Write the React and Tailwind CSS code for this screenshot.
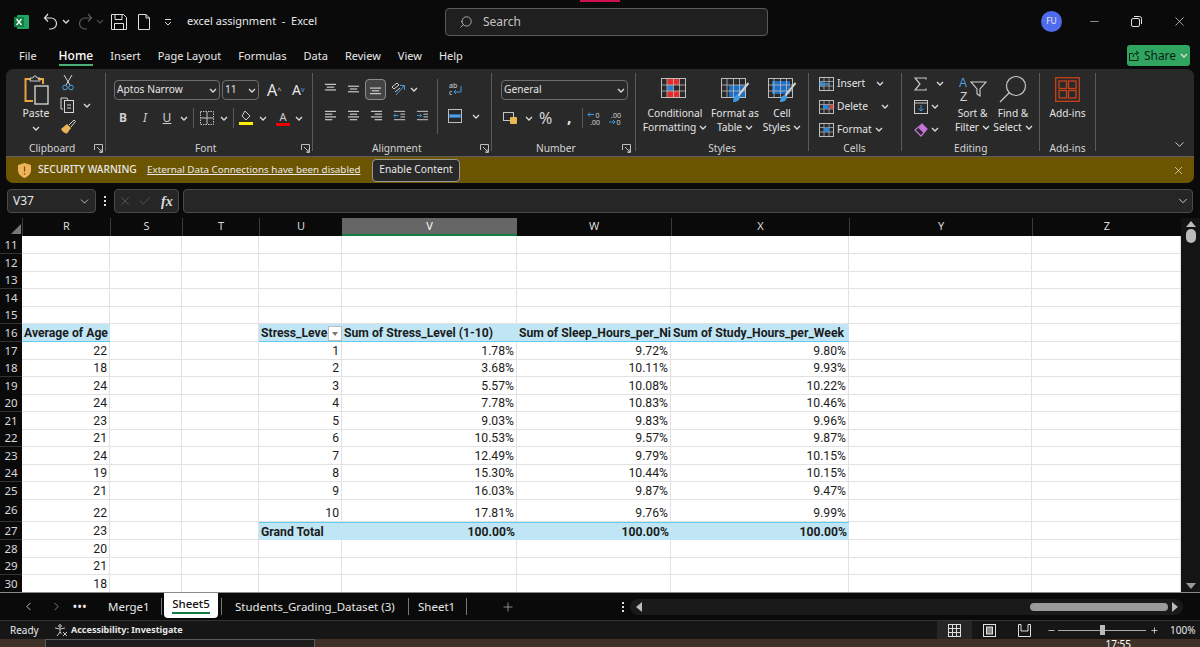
import { Search, X, Minus, Plus, ChevronLeft, ChevronRight, ChevronDown, Check } from 'lucide-react';

const labelRow = 'h-[17px] pt-[2px] flex items-center text-[#d4d4d4]';

const Chev = ({ className = '' }) => (
  <svg width="8" height="5" viewBox="0 0 8 5" className={`shrink-0 ${className}`} fill="none" stroke="#dcdcdc" strokeWidth="1.3">
    <path d="M1 1l3 3 3-3" />
  </svg>
);

const Launcher = () => (
  <svg width="9" height="9" viewBox="0 0 9 9" fill="none" stroke="#bdbdbd" strokeWidth="1" className="shrink-0">
    <path d="M.5 6V.5H8.5V8.5H6M3 3l5 5M8 5v3H5" />
  </svg>
);

const Sep = () => <div className="w-px h-[78px] bg-[#5a5a5a] mt-1 shrink-0" />;
const MiniSep = () => <div className="w-px h-[20px] bg-[#5a5a5a] shrink-0" />;

const Lines = ({ rows, w = 13 }) => (
  <svg width={w} height="14" viewBox="0 0 14 14" stroke="#d6d6d6" strokeWidth="1.2" className="shrink-0">
    {rows.map((r, i) => <path key={i} d={`M${r[0]} ${r[1]}H${r[2]}`} />)}
  </svg>
);

const AddInsIcon = () => (
  <svg width="25" height="25" viewBox="0 0 25 25" fill="none" stroke="#c8421c" strokeWidth="1.3">
    <rect x=".7" y=".7" width="23.6" height="23.6" />
    <rect x="4" y="4" width="7.5" height="7.5" />
    <rect x="13.5" y="4" width="7.5" height="7.5" />
    <rect x="4" y="13.5" width="7.5" height="7.5" />
    <rect x="13.5" y="13.5" width="7.5" height="7.5" />
  </svg>
);

const TableIcon = ({ kind }) => (
  <svg width="29" height="25" viewBox="0 0 29 25" fill="none">
    <rect x=".5" y=".5" width="24" height="19" stroke="#bdbdbd" />
    {kind === 'cond' && (
      <>
        <rect x="6" y="1" width="12" height="6" fill="#e22b2b" />
        <rect x="6" y="7" width="6" height="6" fill="#2f7fd1" />
        <rect x="6" y="13" width="13" height="6" fill="#e22b2b" />
      </>
    )}
    {kind === 'table' && <rect x="8" y="7" width="16" height="12" fill="#1e6fc4" />}
    {kind === 'cell' && <rect x="4" y="3" width="18" height="13" fill="#1e6fc4" />}
    <path d="M.5 7H24.5M.5 13H24.5M6 1V19M12.500 1V19M18.500 1V19" stroke="#bdbdbd" strokeWidth=".8" />
    {kind !== 'cond' && (
      <>
        <path d="M27.500 5L17 18" stroke="#d0d0d0" strokeWidth="2" />
        <path d="M12 24c0-4 2-7 5-7l2 2c0 3-3 5-7 5z" fill="#3d9be0" />
      </>
    )}
  </svg>
);

const CellRowIcon = ({ kind }) => (
  <svg width="16" height="14" viewBox="0 0 16 14" fill="none" className="shrink-0">
    <rect x=".5" y=".5" width="14" height="13" stroke="#bdbdbd" />
    <path d="M.5 4.500H14.500M.5 9H14.500M5 .5V13.500M10 .5V13.500" stroke="#bdbdbd" strokeWidth=".7" />
    {kind === 'insert' && <path d="M1 7H11M4 4L1 7l3 3" stroke="#3d9be0" strokeWidth="1.4" />}
    {kind === 'delete' && (
      <>
        <rect x="4" y="5" width="5" height="4" fill="#2a86dc" />
        <path d="M10.500 4.500l4 4.500M14.500 4.500l-4 4.500" stroke="#e0504a" strokeWidth="1.300" />
      </>
    )}
    {kind === 'format' && <rect x="5" y="4.500" width="5" height="4.500" fill="#2a86dc" />}
  </svg>
);

function Clipboard() {
  return (
    <div className="w-[99px] shrink-0 flex flex-col">
      <div className="flex-1 min-h-0 flex pl-[10px]">
        <div className="w-[40px] flex flex-col items-center pt-[6px]">
          <svg width="25" height="30" viewBox="0 0 25 30" fill="none">
            <path d="M7 4H1.500V26H9" stroke="#e8a33a" strokeWidth="2" />
            <path d="M14 4h5v5" stroke="#e8a33a" strokeWidth="2" />
            <path d="M6 6V3h3l1-2h2l1 2h3v3z" stroke="#c9c9c9" />
            <rect x="11" y="11" width="13" height="18" stroke="#dcdcdc" strokeWidth="1.300" />
          </svg>
          <span className="text-[10.5px] leading-[14px] mt-[1px]">Paste</span>
          <Chev className="mt-[6px]" />
        </div>
        <div className="flex flex-col pl-[4px] pt-[5px] gap-[6px]">
          <svg width="12" height="17" viewBox="0 0 12 17" fill="none" className="ml-[2px]">
            <path d="M2 1l6 10M10 1L4 11" stroke="#d6d6d6" />
            <circle cx="3" cy="13.500" r="2.300" stroke="#4fa3e3" />
            <circle cx="9" cy="13.500" r="2.300" stroke="#4fa3e3" />
          </svg>
          <div className="flex items-center gap-[7px]">
            <svg width="16" height="16" viewBox="0 0 16 16" fill="none" stroke="#d6d6d6">
              <path d="M3 12H1V1h6l1 2" />
              <rect x="4.500" y="3.500" width="9" height="12" />
              <path d="M7 8h4M7 11h4" />
            </svg>
            <Chev />
          </div>
          <svg width="16" height="15" viewBox="0 0 16 15" fill="none">
            <path d="M9 6L14 1l1.500 1.500L11 8" stroke="#d6d6d6" />
            <path d="M1 10l6-5 4 4-4 5.500c-2 0-5-2-6-4.500z" fill="#eab35a" />
          </svg>
        </div>
      </div>
      <div className={`${labelRow} pl-[22px] pr-[2px] justify-between`}>
        <span className="text-[10.2px] ml-[1px]">Clipboard</span>
        <Launcher />
      </div>
    </div>
  );
}

function Font() {
  return (
    <div className="w-[206px] shrink-0 flex flex-col">
      <div className="flex-1 min-h-0 pl-[8px] pt-[11px]">
        <div className="flex items-center gap-[2px]">
          <div className="w-[106px] h-[20px] rounded-[4px] border border-[#6e6e6e] flex items-center justify-between pl-[2px] pr-[2px] text-[10.2px]">
            <span>Aptos Narrow</span>
            <Chev />
          </div>
          <div className="w-[37px] h-[20px] rounded-[4px] border border-[#6e6e6e] flex items-center justify-between pl-[2px] pr-[2px] text-[10.2px]">
            <span>11</span>
            <Chev />
          </div>
          <span className="ml-[6px] text-[16px] leading-none w-[15px] text-[#e6e6e6]">A<sup className="text-[7px] text-[#ddd]">^</sup></span>
          <span className="ml-[8px] text-[14px] leading-none w-[15px] text-[#e6e6e6]">A<sup className="text-[7px] text-[#4fa3e3]">v</sup></span>
        </div>
        <div className="flex items-center mt-[8px] h-[20px] text-[12px] text-[#cfcfcf]">
          <span className="w-[12px] ml-[3px] font-bold text-center">B</span>
          <span className="w-[10px] ml-[11px] italic text-center">I</span>
          <span className="w-[12px] ml-[11px] underline text-center">U</span>
          <Chev className="ml-[7px]" />
          <div className="ml-[5px]"><MiniSep /></div>
          <svg width="14" height="14" viewBox="0 0 14 14" fill="none" stroke="#c4c4c4" className="ml-[6px]">
            <rect x=".5" y=".5" width="13" height="13" strokeDasharray="1.500 1" />
            <path d="M7 1V13M1 7H13" />
          </svg>
          <Chev className="ml-[6px]" />
          <div className="ml-[5px]"><MiniSep /></div>
          <svg width="14" height="16" viewBox="0 0 14 16" fill="none" className="ml-[5px]">
            <path d="M6 1l5 5-4 4-4-4z" stroke="#d0d0d0" />
            <rect y="12" width="14" height="3" fill="#ffee00" />
          </svg>
          <Chev className="ml-[6px]" />
          <div className="w-[14px] ml-[9px] flex flex-col items-center leading-none">
            <span className="text-[11px] leading-[12px]">A</span>
            <span className="w-[14px] h-[3px] bg-[#f00000]" />
          </div>
          <Chev className="ml-[5px]" />
        </div>
      </div>
      <div className={`${labelRow} pr-[2px] justify-between`}>
        <span className="text-[10.2px] ml-[89px]">Font</span>
        <Launcher />
      </div>
    </div>
  );
}

function Alignment() {
  return (
    <div className="w-[178px] shrink-0 flex flex-col">
      <div className="flex-1 min-h-0 flex pl-[11px] pt-[9px]">
        <div>
          <div className="flex items-center h-[22px] gap-[10px]">
            <Lines rows={[[1, 2, 13], [3, 5, 11], [1, 8, 13]]} />
            <Lines rows={[[1, 4, 13], [3, 7, 11], [1, 10, 13]]} />
            <div className="w-[21px] h-[21px] -ml-[5px] rounded-[4px] border border-[#8c8c8c] bg-[#444] flex items-center justify-center">
              <Lines rows={[[1, 6, 13], [3, 9, 11], [1, 12, 13]]} />
            </div>
            <div className="flex items-center gap-[5px] -ml-[5px]">
              <svg width="14" height="14" viewBox="0 0 14 14" fill="none">
                <path d="M1 5l5-4 2 2-5 4zM4 10l5-4" stroke="#cfcfcf" />
                <path d="M5 13L13 4M9 3.500h4.500V8" stroke="#3d9be0" />
              </svg>
              <Chev />
            </div>
          </div>
          <div className="flex items-center mt-[6px] h-[20px] gap-[10px]">
            <Lines rows={[[1, 2, 13], [1, 5, 9], [1, 8, 13], [1, 11, 9]]} />
            <Lines rows={[[1, 2, 13], [3, 5, 11], [1, 8, 13], [3, 11, 11]]} />
            <Lines rows={[[1, 2, 13], [5, 5, 13], [1, 8, 13], [5, 11, 13]]} />
            <svg width="13" height="14" viewBox="0 0 14 14" fill="none" stroke="#d6d6d6">
              <path d="M1 2H13M8 5H13M8 8H13M1 11H13" />
              <path d="M6 6.500H1M3 4.500L1 6.500l2 2" stroke="#3d9be0" />
            </svg>
            <svg width="13" height="14" viewBox="0 0 14 14" fill="none" stroke="#d6d6d6">
              <path d="M1 2H13M8 5H13M8 8H13M1 11H13" />
              <path d="M1 6.500H6M4 4.500l2 2-2 2" stroke="#3d9be0" />
            </svg>
          </div>
        </div>
        <div className="ml-[8px] mt-[1px]"><div className="w-px h-[55px] bg-[#5a5a5a]" /></div>
        <div className="ml-[10px] flex flex-col items-start">
          <div className="h-[22px] flex items-center">
            <svg width="14" height="16" viewBox="0 0 14 16" fill="none">
              <text x="1" y="7" fontSize="7" fill="#d6d6d6">ab</text>
              <text x="1" y="14" fontSize="7" fill="#d6d6d6">c</text>
              <path d="M13 5v6H6M8 9l-2 2 2 2" stroke="#3d9be0" />
            </svg>
          </div>
          <div className="flex items-center mt-[6px] h-[20px] gap-[10px]">
            <svg width="14" height="14" viewBox="0 0 14 14" fill="none">
              <rect x=".5" y=".5" width="13" height="13" stroke="#bdbdbd" />
              <rect x="1" y="5" width="12" height="4" fill="#2a6fb0" />
              <path d="M2 7h10" stroke="#8fd0ff" />
            </svg>
            <Chev />
          </div>
        </div>
      </div>
      <div className={`${labelRow} pr-[2px] justify-between`}>
        <span className="text-[10.2px] ml-[59px]">Alignment</span>
        <Launcher />
      </div>
    </div>
  );
}

function NumberGroup() {
  return (
    <div className="w-[143px] shrink-0 flex flex-col">
      <div className="flex-1 min-h-0 pl-[9px] pt-[11px]">
        <div className="w-[127px] h-[20px] rounded-[4px] border border-[#6e6e6e] flex items-center justify-between px-[2px] text-[10.2px]">
          <span>General</span>
          <Chev />
        </div>
        <div className="flex items-center mt-[8px] h-[20px] pl-[2px]">
          <svg width="15" height="12" viewBox="0 0 15 12" fill="none">
            <rect x=".5" y=".5" width="10" height="8" stroke="#c4c4c4" />
            <rect x="7" y="5" width="7" height="7" rx="1" fill="#e8b94f" />
          </svg>
          <Chev className="ml-[7px]" />
          <span className="ml-[6px] w-[16px] text-[16px] text-[#d8d8d8]">%</span>
          <span className="ml-[12px] w-[8px] text-[16px] font-bold leading-none mb-[3px]">,</span>
          <div className="ml-[7px]"><MiniSep /></div>
          <svg width="15" height="15" viewBox="0 0 15 15" fill="none" className="ml-[4px]">
            <path d="M7 3.500H1M3 1.500L1 3.500l2 2" stroke="#3d9be0" />
            <text x="8.500" y="7" fontSize="7" fill="#d4d4d4">0</text>
            <text x="3" y="14" fontSize="7" fill="#d4d4d4">.00</text>
          </svg>
          <svg width="15" height="15" viewBox="0 0 15 15" fill="none" className="ml-[6px]">
            <text x="3" y="6.500" fontSize="7" fill="#d4d4d4">.00</text>
            <path d="M1 11H7M5 9l2 2-2 2" stroke="#3d9be0" />
            <text x="8.500" y="14" fontSize="7" fill="#d4d4d4">0</text>
          </svg>
        </div>
      </div>
      <div className={`${labelRow} pr-[4px] justify-between`}>
        <span className="text-[10.2px] ml-[44px]">Number</span>
        <Launcher />
      </div>
    </div>
  );
}

function Styles() {
  return (
    <div className="w-[172px] shrink-0 flex flex-col">
      <div className="flex-1 min-h-0 flex pt-[9px] pl-[5px] text-[10.2px] leading-[14px] text-center">
        <div className="w-[68px] flex flex-col items-center">
          <TableIcon kind="cond" />
          <span className="mt-[3px] whitespace-nowrap">Conditional</span>
          <span className="whitespace-nowrap flex items-center gap-[3px]">Formatting <Chev /></span>
        </div>
        <div className="w-[56px] ml-[-2px] flex flex-col items-center">
          <TableIcon kind="table" />
          <span className="mt-[3px] whitespace-nowrap">Format as</span>
          <span className="whitespace-nowrap flex items-center gap-[3px]">Table <Chev /></span>
        </div>
        <div className="w-[38px] flex flex-col items-center">
          <TableIcon kind="cell" />
          <span className="mt-[3px] whitespace-nowrap">Cell</span>
          <span className="whitespace-nowrap flex items-center gap-[3px]">Styles <Chev /></span>
        </div>
      </div>
      <div className={`${labelRow} justify-center`}>
        <span className="text-[10.2px]">Styles</span>
      </div>
    </div>
  );
}

function Cells() {
  return (
    <div className="w-[92px] shrink-0 flex flex-col">
      <div className="flex-1 min-h-0 flex flex-col pl-[10px] pt-[3px] text-[10.2px]">
        <div className="h-[23px] shrink-0 flex items-center">
          <CellRowIcon kind="insert" />
          <span className="ml-[2px] w-[37px]">Insert</span>
          <Chev className="ml-[2px]" />
        </div>
        <div className="h-[23px] shrink-0 flex items-center">
          <CellRowIcon kind="delete" />
          <span className="ml-[2px] w-[42px]">Delete</span>
          <Chev className="ml-[2px]" />
        </div>
        <div className="h-[23px] shrink-0 flex items-center">
          <CellRowIcon kind="format" />
          <span className="ml-[2px]">Format</span>
          <Chev className="ml-[3px]" />
        </div>
      </div>
      <div className={`${labelRow} justify-center`}>
        <span className="text-[10.2px] ml-[-1px]">Cells</span>
      </div>
    </div>
  );
}

function Editing() {
  return (
    <div className="w-[137px] shrink-0 flex flex-col">
      <div className="flex-1 min-h-0 flex pl-[12px] pt-[3px] text-[10.2px] leading-[14px] text-center">
        <div className="w-[40px] flex flex-col">
          <div className="h-[23px] shrink-0 flex items-center gap-[9px]">
            <svg width="13" height="14" viewBox="0 0 13 14" fill="none" stroke="#c8c8c8" strokeWidth="1.200">
              <path d="M12 2.500V1H1l5 6-5 6h11v-1.500" />
            </svg>
            <Chev />
          </div>
          <div className="h-[23px] shrink-0 flex items-center gap-[3px]">
            <svg width="14" height="14" viewBox="0 0 14 14" fill="none">
              <rect x=".5" y=".5" width="13" height="13" stroke="#c8c8c8" />
              <path d="M1 3H13" stroke="#c8c8c8" />
              <path d="M7 5v6M4.500 8.500L7 11l2.500-2.500" stroke="#3d9be0" />
            </svg>
            <Chev />
          </div>
          <div className="h-[23px] shrink-0 flex items-center gap-[3px]">
            <svg width="14" height="14" viewBox="0 0 14 14" fill="none">
              <path d="M8 1l5 5-6 7-6-6z" stroke="#c774d8" strokeWidth="1.200" />
              <path d="M8 1l5 5-3.500 4-5-5z" fill="#c774d8" />
            </svg>
            <Chev />
          </div>
        </div>
        <div className="w-[45px] ml-[-4px] flex flex-col items-center">
          <svg width="28" height="28" viewBox="0 0 28 28" fill="none" className="mt-[3px]">
            <text x="0" y="11.500" fontSize="12" fontFamily="Liberation Sans" fill="#4fa3e3">A</text>
            <text x="1" y="25.500" fontSize="12" fontFamily="Liberation Sans" fill="#d4d4d4">Z</text>
            <path d="M12 7H27l-6 7v7l-3-2v-5z" stroke="#d0d0d0" strokeWidth="1.100" />
          </svg>
          <span className="mt-[3px] whitespace-nowrap">Sort &amp;</span>
          <span className="whitespace-nowrap flex items-center gap-[3px]">Filter <Chev /></span>
        </div>
        <div className="w-[40px] ml-[-2px] flex flex-col items-center">
          <svg width="28" height="28" viewBox="0 0 28 28" fill="none" stroke="#c8c8c8" strokeWidth="1.200" className="mt-[3px]">
            <circle cx="17" cy="11" r="9.500" />
            <path d="M10 18L1 27" />
          </svg>
          <span className="mt-[3px] whitespace-nowrap">Find &amp;</span>
          <span className="whitespace-nowrap flex items-center gap-[3px]">Select <Chev /></span>
        </div>
      </div>
      <div className={`${labelRow} pl-[52px]`}>
        <span className="text-[10.2px]">Editing</span>
      </div>
    </div>
  );
}

function AddIns() {
  return (
    <div className="w-[55px] shrink-0 flex flex-col">
      <div className="flex-1 min-h-0 flex flex-col items-center pt-[8px] text-[10.2px] leading-[14px]">
        <AddInsIcon />
        <span className="mt-[4px] whitespace-nowrap">Add-ins</span>
      </div>
      <div className={`${labelRow} justify-center`}>
        <span className="text-[10.2px]">Add-ins</span>
      </div>
    </div>
  );
}

const pct = [
  ['1', '1.78%', '9.72%', '9.80%'],
  ['2', '3.68%', '10.11%', '9.93%'],
  ['3', '5.57%', '10.08%', '10.22%'],
  ['4', '7.78%', '10.83%', '10.46%'],
  ['5', '9.03%', '9.83%', '9.96%'],
  ['6', '10.53%', '9.57%', '9.87%'],
  ['7', '12.49%', '9.79%', '10.15%'],
  ['8', '15.30%', '10.44%', '10.15%'],
  ['9', '16.03%', '9.87%', '9.47%'],
  ['10', '17.81%', '9.76%', '9.99%'],
];
const ages = ['22', '18', '24', '24', '23', '21', '24', '19', '21', '22', '23', '20', '21', '18'];
const heights = {
  11: 'h-[18px]', 12: 'h-[17px]', 13: 'h-[18px]', 14: 'h-[17px]', 15: 'h-[18px]',
  16: 'h-[18px]', 17: 'h-[17px]', 18: 'h-[18px]', 19: 'h-[17px]', 20: 'h-[18px]',
  21: 'h-[17px]', 22: 'h-[18px]', 23: 'h-[17px]', 24: 'h-[18px]', 25: 'h-[17px]',
  26: 'h-[23px]', 27: 'h-[18px]', 28: 'h-[17px]', 29: 'h-[18px]', 30: 'h-[17px]',
};

const gridCols = 'grid grid-cols-[22px_88px_72px_77px_83px_175px_154px_178px_183px_149px]';
const cell = 'border-r border-b border-[#e2e2e2] px-[2px] flex items-end justify-end leading-[15px] whitespace-nowrap overflow-hidden';
const head = 'bg-[#c0e6f5] border-b border-[#61cbf3] px-[2px] flex items-end font-bold leading-[15px] whitespace-nowrap overflow-hidden';
const total = 'bg-[#c0e6f5] border-t border-[#61cbf3] px-[2px] flex items-end justify-end font-bold leading-[15px] whitespace-nowrap overflow-hidden';

function SheetRow({ n }) {
  const i = n - 17;
  const age = n >= 17 ? ages[i] : '';
  const row = n >= 17 && n <= 26 ? pct[i] : null;
  return (
    <div className={`${gridCols} ${heights[n]}`}>
      <div className="bg-[#0a0a0a] text-[#dadada] text-[11.5px] flex items-center justify-center border-b border-[#333] font-['Noto_Sans',sans-serif]">{n}</div>
      {n === 16 ? (
        <>
          <div className={head}>Average of Age</div>
          <div className={cell} />
          <div className={cell} />
          <div className={`${head} justify-between pr-0`}>
            <span>Stress_Leve</span>
            <span className="w-[14px] h-[15px] bg-white border border-[#bdbdbd] flex items-center justify-center">
              <span className="w-0 h-0 border-x-[3px] border-x-transparent border-t-[4px] border-t-[#777]" />
            </span>
          </div>
          <div className={head}>Sum of Stress_Level (1-10)</div>
          <div className={`${head} pr-0`}>Sum of Sleep_Hours_per_Ni</div>
          <div className={head}>Sum of Study_Hours_per_Week</div>
          <div className={cell} />
          <div className={cell} />
        </>
      ) : n === 27 ? (
        <>
          <div className={cell}>{age}</div>
          <div className={cell} />
          <div className={cell} />
          <div className={`${total} justify-start`}>Grand Total</div>
          <div className={total}>100.00%</div>
          <div className={total}>100.00%</div>
          <div className={total}>100.00%</div>
          <div className={cell} />
          <div className={cell} />
        </>
      ) : (
        <>
          <div className={cell}>{age}</div>
          <div className={cell} />
          <div className={cell} />
          <div className={cell}>{row && row[0]}</div>
          <div className={cell}>{row && row[1]}</div>
          <div className={cell}>{row && row[2]}</div>
          <div className={cell}>{row && row[3]}</div>
          <div className={cell} />
          <div className={cell} />
        </>
      )}
    </div>
  );
}

const rowNums = Array.from({ length: 20 }, (_, i) => i + 11);
const menu = ['Insert', 'Page Layout', 'Formulas', 'Data', 'Review', 'View', 'Help'];

export default function App() {
  return (
    <div className="w-[1200px] h-[647px] overflow-hidden bg-[#0a0a0a] text-[#e8e8e8] flex flex-col relative font-['Noto_Sans',sans-serif] text-[11px]">
      <div className="absolute top-0 left-[580px] w-[40px] h-[2px] bg-[#d0104c]" />

      {/* title bar */}
      <div className="h-[43px] shrink-0 flex items-center">
        <svg width="16" height="16" viewBox="0 0 16 16" className="ml-[14px] shrink-0">
          <rect x="3" y="1" width="12" height="14" rx="1" fill="#21a366" />
          <rect x="0" y="3" width="10" height="10" fill="#107c41" />
          <path d="M2.500 5l5 6M7.500 5l-5 6" stroke="#fff" strokeWidth="1.300" />
        </svg>
        <svg width="15" height="17" viewBox="0 0 15 17" fill="none" stroke="#e0e0e0" strokeWidth="1.200" className="ml-[13px] shrink-0">
          <path d="M5 1L1.500 5 5 8.500M2 5h6a5 5 0 0 1 0 11H6" />
        </svg>
        <Chev className="ml-[4px]" />
        <svg width="15" height="17" viewBox="0 0 15 17" fill="none" stroke="#5c5c5c" strokeWidth="1.200" className="ml-[8px] shrink-0">
          <path d="M10 1l3.500 4L10 8.500M13 5H7a5 5 0 0 0 0 11h2" />
        </svg>
        <Chev className="ml-[3px] opacity-30" />
        <svg width="16" height="16" viewBox="0 0 16 16" fill="none" stroke="#e0e0e0" className="ml-[7px] shrink-0">
          <path d="M.5.500h12l3 3v12H.5zM4 .5v5h7v-5M3.500 15.500v-6h9v6" />
        </svg>
        <svg width="12" height="16" viewBox="0 0 12 16" fill="none" stroke="#e0e0e0" className="ml-[11px] shrink-0">
          <path d="M.5.500H8L11.500 4v11.500H.5zM8 .5V4h3.500" />
        </svg>
        <svg width="8" height="8" viewBox="0 0 8 8" fill="none" stroke="#e0e0e0" className="ml-[14px] shrink-0">
          <path d="M1 1.500H7M1 4l3 3 3-3" />
        </svg>
        <span className="ml-[15px] text-[11px] w-[258px] shrink-0">excel assignment&nbsp; -&nbsp; Excel</span>
        <div className="w-[323px] h-[28px] shrink-0 rounded-[4px] border border-[#5a5a5a] bg-[#1f1f1f] flex items-center pl-[13px] text-[#c4c4c4]">
          <Search size={14} strokeWidth={1.4} className="-scale-x-100" />
          <span className="ml-[10px] text-[12px]">Search</span>
        </div>
        <div className="ml-[273px] w-[21px] h-[21px] shrink-0 rounded-full bg-[#4f6bed] flex items-center justify-center text-[8.5px]">FU</div>
        <Minus size={13} strokeWidth={1.1} className="ml-[26px] shrink-0" />
        <svg width="11" height="11" viewBox="0 0 11 11" fill="none" stroke="#e0e0e0" className="ml-[30px] shrink-0">
          <rect x=".5" y="2.500" width="8" height="8" rx="1.500" />
          <path d="M3 .5h5.500a2 2 0 0 1 2 2V8" />
        </svg>
        <X size={15} strokeWidth={1.1} className="ml-[30px] shrink-0" />
      </div>

      {/* menu */}
      <div className="h-[26px] shrink-0 flex items-start text-[11px] leading-[26px] relative">
        <div className="flex ml-[19px] gap-[17px]">
          <span className="mr-[5px]">File</span>
          <div className="relative">
            <span className="text-white font-medium text-[12px]">Home</span>
            <span className="absolute left-0 right-0 top-[21px] h-[2px] bg-[#4caf77]" />
          </div>
          {menu.map((m) => <span key={m}>{m}</span>)}
        </div>
        <div className="ml-auto mr-[10px] mt-[2px] w-[63px] h-[21px] rounded-[3px] bg-[#2fa560] flex items-center justify-center gap-[4px] text-[#0b1f12] text-[12px]">
          <svg width="11" height="11" viewBox="0 0 11 11" fill="none" stroke="#0b1f12">
            <path d="M9 6v4.500H.5V3.500H4M4 7c0-3 2-4 5-4M7 .8L9.500 3 7 5.200" />
          </svg>
          <span>Share</span>
          <Chev />
        </div>
      </div>

      {/* ribbon */}
      <div className="mx-[6px] h-[87px] shrink-0 rounded-t-[7px] bg-[#292929] flex text-[#e4e4e4] relative">
        <Clipboard /><Sep />
        <Font /><Sep />
        <Alignment /><Sep />
        <NumberGroup /><Sep />
        <Styles /><Sep />
        <Cells /><Sep />
        <Editing /><Sep />
        <AddIns /><Sep />
        <ChevronDown size={15} strokeWidth={1.4} className="ml-auto mr-[7px] mt-[68px]" />
      </div>

      {/* warning bar */}
      <div className="mx-[6px] h-[27px] shrink-0 rounded-b-[7px] bg-[#6c5500] border-t border-[#5e5e5e] flex items-center">
        <svg width="13" height="15" viewBox="0 0 13 15" className="ml-[12px] shrink-0">
          <path d="M6.500 0L13 2v5c0 4-3 6.500-6.500 8C3 13.500 0 11 0 7V2z" fill="#efb45b" />
          <path d="M6.500 3.500V8.500M6.500 10v1.500" stroke="#6c5500" strokeWidth="1.200" />
        </svg>
        <span className="ml-[7px] text-[10.2px] font-medium w-[105px] whitespace-nowrap">SECURITY WARNING</span>
        <span className="ml-[4px] text-[9.8px] underline w-[218px] whitespace-nowrap">External Data Connections have been disabled</span>
        <div className="ml-[7px] w-[88px] h-[23px] rounded-[4px] border border-[#9a9a9a] bg-[#292929] flex items-center justify-center text-[10.2px]">Enable Content</div>
        <X size={13} strokeWidth={1.3} className="ml-auto mr-[9px]" />
      </div>

      {/* formula bar */}
      <div className="mt-[6px] h-[24px] shrink-0 flex items-stretch pl-[7px] pr-[7px]">
        <div className="w-[89px] rounded-[4px] border border-[#4a4a4a] bg-[#262626] flex items-center justify-between pl-[5px] pr-[4px] text-[12px]">
          <span>V37</span>
          <ChevronDown size={13} strokeWidth={1.4} />
        </div>
        <div className="w-[18px] flex flex-col items-center justify-center gap-[2px]">
          <span className="w-[2px] h-[2px] bg-[#ddd]" />
          <span className="w-[2px] h-[2px] bg-[#ddd]" />
          <span className="w-[2px] h-[2px] bg-[#ddd]" />
        </div>
        <div className="w-[65px] rounded-[4px] border border-[#4a4a4a] bg-[#262626] flex items-center pl-[3px]">
          <X size={14} strokeWidth={1.1} className="text-[#6a6a6a]" />
          <Check size={14} strokeWidth={1.1} className="text-[#6a6a6a] ml-[6px]" />
          <span className="ml-[9px] font-['Liberation_Serif',serif] italic font-bold text-[14px] text-[#dcdcdc]">fx</span>
        </div>
        <div className="ml-[4px] flex-1 rounded-[4px] border border-[#4a4a4a] bg-[#262626] flex items-center justify-end pr-[2px]">
          <ChevronDown size={14} strokeWidth={1.4} />
        </div>
      </div>

      {/* grid */}
      <div className="mt-[5px] h-[374px] shrink-0 flex">
        <div className="w-[1181px] shrink-0 flex flex-col">
          <div className={`${gridCols} h-[18px] text-[11px] text-[#dadada] leading-[16px] text-center`}>
            <div className="flex items-end justify-end">
              <span className="w-0 h-0 border-l-[10px] border-l-transparent border-b-[10px] border-b-[#777] mr-[1px] mb-[2px]" />
            </div>
            <div className="border-l border-[#3a3a3a]">R</div>
            <div className="border-l border-[#3a3a3a]">S</div>
            <div className="border-l border-[#3a3a3a]">T</div>
            <div className="border-l border-[#3a3a3a]">U</div>
            <div className="bg-[#666] border-b-2 border-[#107c41] text-white">V</div>
            <div>W</div>
            <div className="border-l border-[#3a3a3a]">X</div>
            <div className="border-l border-[#3a3a3a]">Y</div>
            <div className="border-l border-[#3a3a3a]">Z</div>
          </div>
          <div className="flex-1 bg-white text-[#1c1c1c] text-[12.2px] font-['Roboto',sans-serif]">
            {rowNums.map((n) => <SheetRow key={n} n={n} />)}
          </div>
        </div>
        <div className="flex-1 flex flex-col items-center justify-between bg-[#141414] py-[3px]">
          <div className="flex flex-col items-center">
            <span className="w-0 h-0 border-x-[5px] border-x-transparent border-b-[6px] border-b-[#bbb]" />
            <span className="w-[10px] h-[14px] mt-[2px] rounded-[5px] bg-[#bbb]" />
          </div>
          <span className="w-0 h-0 border-x-[5px] border-x-transparent border-t-[6px] border-t-[#999]" />
        </div>
      </div>

      {/* sheet tabs */}
      <div className="h-[28px] shrink-0 border-t border-[#8a8a8a] flex items-center text-[11.5px]">
        <ChevronLeft size={13} strokeWidth={1.5} className="ml-[22px] shrink-0" />
        <ChevronRight size={13} strokeWidth={1.3} className="ml-[15px] shrink-0 text-[#aaa]" />
        <span className="ml-[10px] tracking-[1px] font-bold text-[10px] w-[22px] shrink-0">•••</span>
        <span className="ml-[13px] w-[53px] shrink-0">Merge1</span>
        <div className="w-px h-[17px] shrink-0 bg-[#777]" />
        <div className="ml-[2px] self-start w-[54px] h-[25px] shrink-0 rounded-b-[4px] bg-white text-[#111] flex flex-col items-center pt-[3px]">
          <span className="leading-[15px] font-medium">Sheet5</span>
          <span className="mt-[1px] w-[38px] h-[2px] bg-[#107c41]" />
        </div>
        <div className="ml-[3px] w-px h-[17px] shrink-0 bg-[#777]" />
        <span className="ml-[13px] w-[173px] shrink-0 whitespace-nowrap">Students_Grading_Dataset (3)</span>
        <div className="w-px h-[17px] shrink-0 bg-[#777]" />
        <span className="ml-[9px] w-[48px] shrink-0">Sheet1</span>
        <div className="w-px h-[17px] shrink-0 bg-[#777]" />
        <Plus size={14} strokeWidth={1.2} className="ml-[34px] shrink-0 text-[#bbb]" />
        <div className="ml-[107px] flex flex-col gap-[2px] items-center shrink-0">
          <span className="w-[2px] h-[2px] bg-[#ddd]" />
          <span className="w-[2px] h-[2px] bg-[#ddd]" />
          <span className="w-[2px] h-[2px] bg-[#ddd]" />
        </div>
        <div className="ml-[6px] w-[553px] h-[16px] shrink-0 rounded-[8px] bg-[#1a1a1a] flex items-center pl-[6px]">
          <span className="w-0 h-0 border-y-[5px] border-y-transparent border-r-[6px] border-r-[#bbb]" />
          <span className="ml-[388px] w-[138px] h-[8px] rounded-[4px] bg-[#9a9a9a]" />
          <span className="ml-[4px] w-0 h-0 border-y-[5px] border-y-transparent border-l-[6px] border-l-[#bbb]" />
        </div>
      </div>

      {/* status bar */}
      <div className="h-[19px] shrink-0 bg-[#161616] border-t border-[#333] flex items-center text-[10px]">
        <span className="ml-[10px] w-[44px]">Ready</span>
        <svg width="14" height="13" viewBox="0 0 14 13" fill="none" stroke="#ddd" strokeWidth=".9">
          <circle cx="6" cy="2" r="1.300" />
          <path d="M1 4l5 1 5-1M6 5v3L3 12M6 8l1.500 2M9 8l4 4M13 8l-4 4" />
        </svg>
        <span className="ml-[3px] font-bold text-[9px]">Accessibility: Investigate</span>
        <div className="ml-auto h-full w-[35px] bg-[#262626] flex items-center justify-center">
          <svg width="13" height="13" viewBox="0 0 13 13" fill="none" stroke="#e0e0e0">
            <rect x=".5" y=".5" width="12" height="12" />
            <path d="M4.500 .5V12.500M8.500 .5V12.500M.5 4.500H12.500M.5 8.500H12.500" />
          </svg>
        </div>
        <svg width="13" height="13" viewBox="0 0 13 13" fill="none" stroke="#e0e0e0" className="ml-[11px]">
          <rect x=".5" y=".5" width="12" height="12" />
          <rect x="3.500" y="3" width="6" height="7" fill="#888" />
        </svg>
        <svg width="13" height="13" viewBox="0 0 13 13" fill="none" stroke="#e0e0e0" className="ml-[22px]">
          <path d="M.5 .5H3V7H10V.5H12.500V12.500H.5z" />
        </svg>
        <Minus size={9} className="ml-[16px]" />
        <div className="ml-[2px] w-[88px] h-[1px] bg-[#aaa] flex items-center">
          <span className="ml-[42px] w-[5px] h-[10px] bg-[#bbb]" />
        </div>
        <Plus size={9} className="ml-[4px]" />
        <span className="ml-[11px] w-[30px] text-[10px]">100%</span>
      </div>

      {/* taskbar strip */}
      <div className="flex-1 bg-[#3f3128] flex items-start">
        <div className="ml-[45px] w-[270px] h-full bg-[#1e1e1e] border-l border-t border-r border-[#5a5a5a]" />
        <span className="ml-auto mr-[69px] -mt-[1px] text-[10px] leading-[12px] text-white">17:55</span>
      </div>
    </div>
  );
}
